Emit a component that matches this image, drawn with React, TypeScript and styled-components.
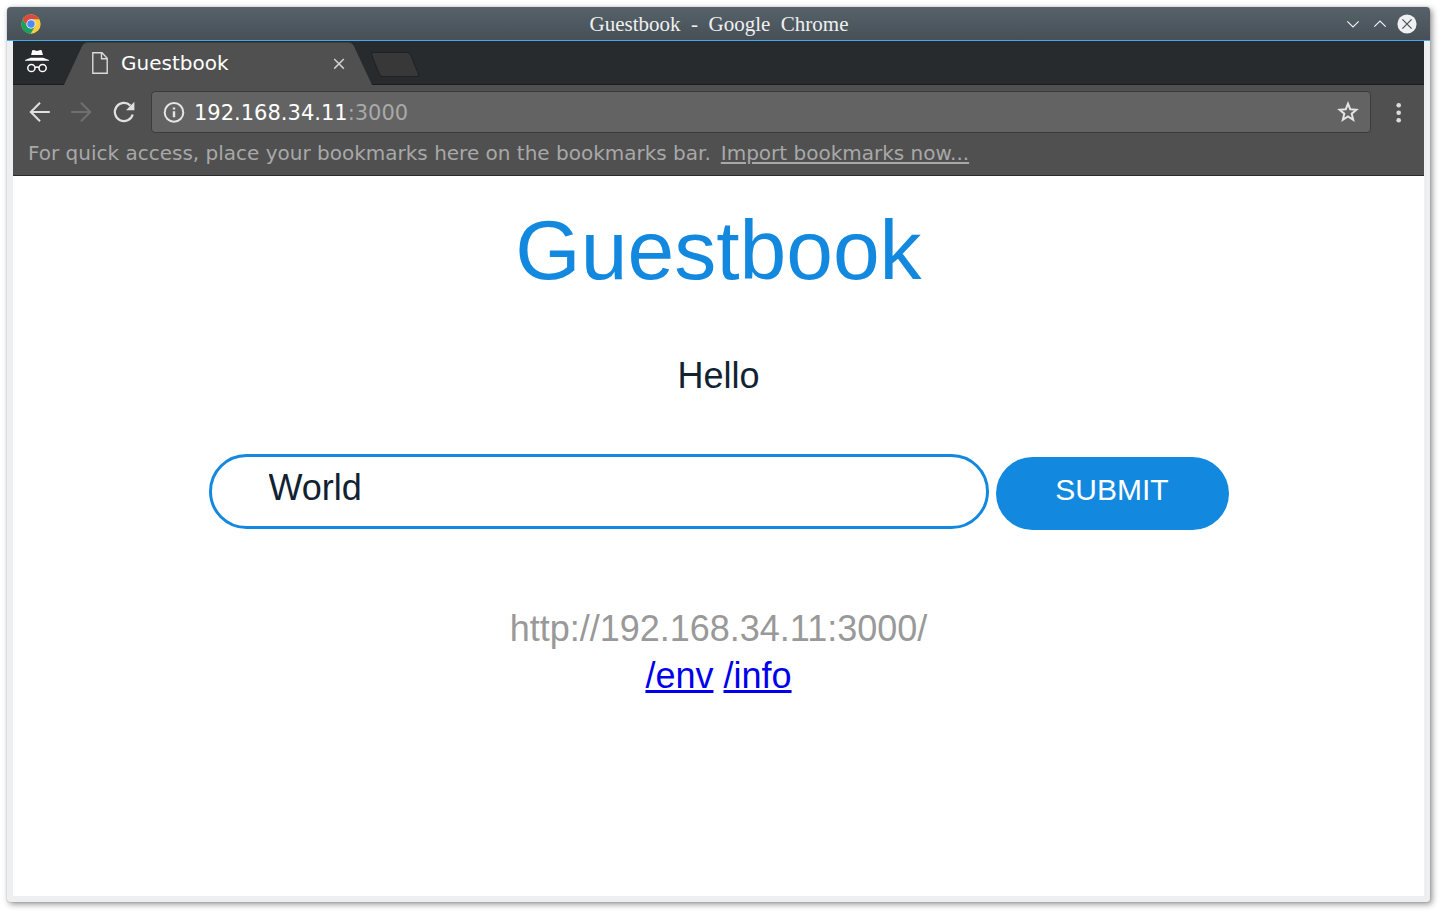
import React, { useState } from "react";
import styled, { createGlobalStyle } from "styled-components";

const GlobalStyle = createGlobalStyle`
  *, *::before, *::after { box-sizing: border-box; }
  body { margin: 0; background: #fff; }
  button { font: inherit; border: 0; background: none; padding: 0; cursor: pointer; }
  svg { display: block; flex: none; }
`;

const Desktop = styled.div`
  display: flex;
  min-height: 100vh;
  padding: 7px 13px 13px 7px;
`;

const BrowserWindow = styled.div`
  flex: 1;
  min-width: 0;
  display: flex;
  flex-direction: column;
  border-radius: 4px 4px 3px 3px;
  background: #eeeff1;
  box-shadow: 0 0 1px 0 rgba(0, 0, 0, 0.4), 2px 2px 6px 0 rgba(0, 0, 0, 0.45);
`;

const TitleBar = styled.header`
  display: grid;
  grid-template-columns: 1fr auto 1fr;
  align-items: center;
  height: 34px;
  padding: 0 13px 0 14px;
  border-bottom: 1px solid #3daee9;
  border-radius: 4px 4px 0 0;
  background: linear-gradient(#566169, #475057);
`;

const WindowTitle = styled.div`
  color: #eff0f1;
  font: 21px/32px "Liberation Serif", serif;
  white-space: pre;
`;

const WindowControls = styled.div`
  display: flex;
  justify-content: flex-end;
  gap: 7px;
`;

const ControlButton = styled.button`
  width: 20px;
  height: 20px;
`;

const Frame = styled.div`
  flex: 1;
  display: flex;
  flex-direction: column;
  margin: 0 6px 6px;
  background: #fff;
`;

const TabStrip = styled.div`
  display: flex;
  height: 44px;
  background: #272b2d;
  border-bottom: 1px solid #1b1e20;
`;

const Incognito = styled.div`
  width: 50px;
  padding: 8px 0 0 11px;
`;

const Tab = styled.div`
  position: relative;
  isolation: isolate;
  display: flex;
  align-items: center;
  width: 310px;
  height: 44px;
  padding: 0 24px 0 29px;
  color: #fff;
  font: 20px/24px "DejaVu Sans", sans-serif;

  &::before,
  &::after {
    content: "";
    position: absolute;
    z-index: -1;
    top: 1px;
    bottom: 0;
    width: 60%;
    background: #505050;
    border-top: 1px solid #3a3c3d;
  }
  &::before {
    left: 11px;
    border-top-left-radius: 4px;
    transform: skewX(-25deg);
  }
  &::after {
    right: 11px;
    border-top-right-radius: 4px;
    transform: skewX(25deg);
  }
`;

const TabTitle = styled.span`
  flex: 1;
  margin-left: 13px;
`;

const NewTabButton = styled.button`
  width: 40px;
  height: 25px;
  margin: 11px 0 0 2px;
  border: 1px solid #1f2224;
  border-radius: 3px;
  background: #383838;
  transform: skewX(22deg);
`;

const Toolbar = styled.div`
  display: flex;
  align-items: center;
  padding: 6px 13px 0 14px;
  background: #505050;
`;

const NavButtons = styled.div`
  display: flex;
  gap: 18px;
  margin-right: 16px;
`;

const IconButton = styled.button`
  width: 24px;
  height: 24px;
`;

const AddressBar = styled.div`
  flex: 1;
  display: flex;
  align-items: center;
  height: 42px;
  padding: 0 10px;
  margin-right: 16px;
  border: 1px solid #3b3b3b;
  border-radius: 4px;
  background: #636363;
`;

const Address = styled.div`
  flex: 1;
  margin-left: 8px;
  padding-top: 2px;
  color: #fff;
  font: 21px/26px "DejaVu Sans", sans-serif;
`;

const Port = styled.span`
  color: #a9a9a9;
`;

const BookmarksBar = styled.div`
  display: flex;
  gap: 10px;
  height: 43px;
  padding: 8px 15px 0;
  border-bottom: 1px solid #2b2b2b;
  background: #505050;
  color: #a8a8a8;
  font: 20px/24px "DejaVu Sans", sans-serif;
  white-space: nowrap;
`;

const ImportLink = styled.a`
  color: inherit;
  text-underline-offset: 2px;
`;

const Page = styled.main`
  flex: 1;
  display: flex;
  flex-direction: column;
  align-items: center;
  padding: 26px 24px;
  color: #112233;
  font: 36px/42px "Liberation Sans", sans-serif;
`;

const Heading = styled.h1`
  margin: 0 0 57px;
  color: #1388df;
  font-size: 84px;
  font-weight: 400;
  line-height: 96px;
`;

const Entries = styled.div`
  margin-bottom: 57px;
`;

const EntryForm = styled.form`
  display: flex;
  align-items: flex-start;
  gap: 7px;
  width: 100%;
  max-width: 1020px;
  margin-bottom: 75px;
`;

const EntryInput = styled.input`
  flex: 1;
  min-width: 0;
  height: 75px;
  padding: 0 57px 8px;
  border: 3px solid #1388df;
  border-radius: 38px;
  outline: 0;
  background: #fff;
  color: inherit;
  font: inherit;
`;

const SubmitButton = styled.button`
  width: 233px;
  height: 73px;
  margin-top: 3px;
  padding-bottom: 8px;
  border-radius: 37px;
  background: #1388df;
  color: #fff;
  font-size: 30px;
`;

const Footer = styled.footer`
  color: #999;
  line-height: 47px;
  text-align: center;
`;

const FooterLink = styled.a`
  color: #0000ee;
`;

const ChromeLogo = () => (
  <svg width="20" height="20" viewBox="0 0 20 20" aria-hidden="true">
    <circle cx="10" cy="10" r="9.7" fill="#fccd43" />
    <path d="M1.6 5.15A9.7 9.7 0 0 1 18.4 5.3H10L6 12.3Z" fill="#db4a3e" />
    <path d="M1.6 5.15A9.7 9.7 0 0 0 9.6 19.7L14 12.4 6 12.3Z" fill="#1aa15f" />
    <circle cx="10" cy="10" r="4.7" fill="#e6ecf5" />
    <circle cx="10" cy="10" r="3.7" fill="#4c8bf5" />
  </svg>
);

const IncognitoIcon = () => (
  <svg width="26" height="26" viewBox="0 0 26 26" fill="#fff" aria-hidden="true">
    <path d="M7.1 6 8.2 1.6Q8.5.8 9.5 1L13 2 16.5 1Q17.5.8 17.8 1.6L18.9 6Z" />
    <path d="M1 11.7V10.9L6.8 8.7H19.2L25 10.9V11.7Z" />
    <g fill="none" stroke="#fff" strokeWidth="1.5">
      <circle cx="7.4" cy="19" r="3.6" />
      <circle cx="18.6" cy="19" r="3.6" />
      <path d="M11 18.6Q13 17.6 15 18.6" />
    </g>
  </svg>
);

const PageIcon = () => (
  <svg width="16" height="22" viewBox="0 0 16 22" fill="none" stroke="#dadada" strokeWidth="1.4" aria-hidden="true">
    <path d="M.8.8H10L15.2 6.2V21.2H.8Z" />
    <path d="M9.5 1V6.7H15" />
  </svg>
);

const BackIcon = ({ color }: { color: string }) => (
  <svg width="24" height="24" viewBox="0 0 24 24" fill="none" stroke={color} strokeWidth="2" aria-hidden="true">
    <path d="M22.8 12H4M13 2.8 3.8 12 13 21.2" />
  </svg>
);

const ForwardIcon = ({ color }: { color: string }) => (
  <svg width="24" height="24" viewBox="0 0 24 24" fill="none" stroke={color} strokeWidth="2" aria-hidden="true">
    <path d="M2.2 12H21M12 2.8 21.2 12 12 21.2" />
  </svg>
);

const ReloadIcon = () => (
  <svg width="24" height="24" viewBox="0 0 24 24" aria-hidden="true">
    <path d="M21.7 14.5A9.1 9.1 0 1 1 19.4 5.6" fill="none" stroke="#e0e0e0" strokeWidth="2.2" />
    <path d="M23.4 1.8V10.2H15Z" fill="#e0e0e0" />
  </svg>
);

const InfoIcon = () => (
  <svg width="24" height="24" viewBox="0 0 24 24" fill="none" stroke="#e6e6e6" strokeWidth="2" aria-hidden="true">
    <circle cx="12" cy="12.4" r="9.3" />
    <path d="M12 11.2V17.2M12 7.4V9.6" strokeWidth="2.4" />
  </svg>
);

const StarIcon = () => (
  <svg width="24" height="24" viewBox="0 0 24 24" fill="none" stroke="#e4e4e4" strokeWidth="2" aria-hidden="true">
    <path d="M12 3.7 14.2 9.2 20.4 9.7 15.7 13.7 17.2 19.8 12 16.5 6.8 19.8 8.3 13.7 3.6 9.7 9.8 9.2Z" />
  </svg>
);

const MenuIcon = () => (
  <svg width="24" height="24" viewBox="0 0 24 24" fill="#dcdcdc" aria-hidden="true">
    <circle cx="11.7" cy="5.3" r="2.3" />
    <circle cx="11.7" cy="12.8" r="2.3" />
    <circle cx="11.7" cy="20.3" r="2.3" />
  </svg>
);

const ChevronIcon = ({ d }: { d: string }) => (
  <svg width="20" height="20" viewBox="0 0 20 20" fill="none" stroke="#eff0f1" strokeWidth="1.2" aria-hidden="true">
    <path d={d} />
  </svg>
);

const CloseWindowIcon = () => (
  <svg width="20" height="20" viewBox="0 0 20 20" aria-hidden="true">
    <circle cx="10" cy="10" r="9.6" fill="#eff0f1" />
    <path d="M5.4 5.4 14.6 14.6M14.6 5.4 5.4 14.6" stroke="#475057" strokeWidth="1.2" />
  </svg>
);

const CloseTabIcon = () => (
  <svg width="20" height="20" viewBox="0 0 20 20" aria-hidden="true">
    <path d="M5.2 6 14.8 15.6M14.8 6 5.2 15.6" stroke="#d0d0d0" strokeWidth="1.5" />
  </svg>
);

export default function App() {
  const [entry, setEntry] = useState("World");

  return (
    <>
      <GlobalStyle />
      <Desktop>
        <BrowserWindow>
          <TitleBar>
            <ChromeLogo />
            <WindowTitle>{"Guestbook  -  Google  Chrome"}</WindowTitle>
            <WindowControls>
              <ControlButton aria-label="Minimize">
                <ChevronIcon d="M4.3 7.3 10 13 15.7 7.3" />
              </ControlButton>
              <ControlButton aria-label="Maximize">
                <ChevronIcon d="M4.3 12.7 10 7 15.7 12.7" />
              </ControlButton>
              <ControlButton aria-label="Close window">
                <CloseWindowIcon />
              </ControlButton>
            </WindowControls>
          </TitleBar>
          <Frame>
            <TabStrip>
              <Incognito>
                <IncognitoIcon />
              </Incognito>
              <Tab>
                <PageIcon />
                <TabTitle>Guestbook</TabTitle>
                <ControlButton aria-label="Close tab">
                  <CloseTabIcon />
                </ControlButton>
              </Tab>
              <NewTabButton aria-label="New tab" />
            </TabStrip>
            <Toolbar>
              <NavButtons>
                <IconButton aria-label="Back">
                  <BackIcon color="#e0e0e0" />
                </IconButton>
                <IconButton aria-label="Forward" disabled>
                  <ForwardIcon color="#707070" />
                </IconButton>
                <IconButton aria-label="Reload">
                  <ReloadIcon />
                </IconButton>
              </NavButtons>
              <AddressBar>
                <InfoIcon />
                <Address>
                  192.168.34.11<Port>:3000</Port>
                </Address>
                <IconButton aria-label="Bookmark this page">
                  <StarIcon />
                </IconButton>
              </AddressBar>
              <IconButton aria-label="Menu">
                <MenuIcon />
              </IconButton>
            </Toolbar>
            <BookmarksBar>
              <span>For quick access, place your bookmarks here on the bookmarks bar.</span>
              <ImportLink href="#import">Import bookmarks now...</ImportLink>
            </BookmarksBar>
            <Page>
              <Heading>Guestbook</Heading>
              <Entries>Hello</Entries>
              <EntryForm onSubmit={(event) => event.preventDefault()}>
                <EntryInput
                  aria-label="Guestbook entry"
                  value={entry}
                  onChange={(event) => setEntry(event.target.value)}
                />
                <SubmitButton type="submit">SUBMIT</SubmitButton>
              </EntryForm>
              <Footer>
                <div>http://192.168.34.11:3000/</div>
                <div>
                  <FooterLink href="/env">/env</FooterLink> <FooterLink href="/info">/info</FooterLink>
                </div>
              </Footer>
            </Page>
          </Frame>
        </BrowserWindow>
      </Desktop>
    </>
  );
}
